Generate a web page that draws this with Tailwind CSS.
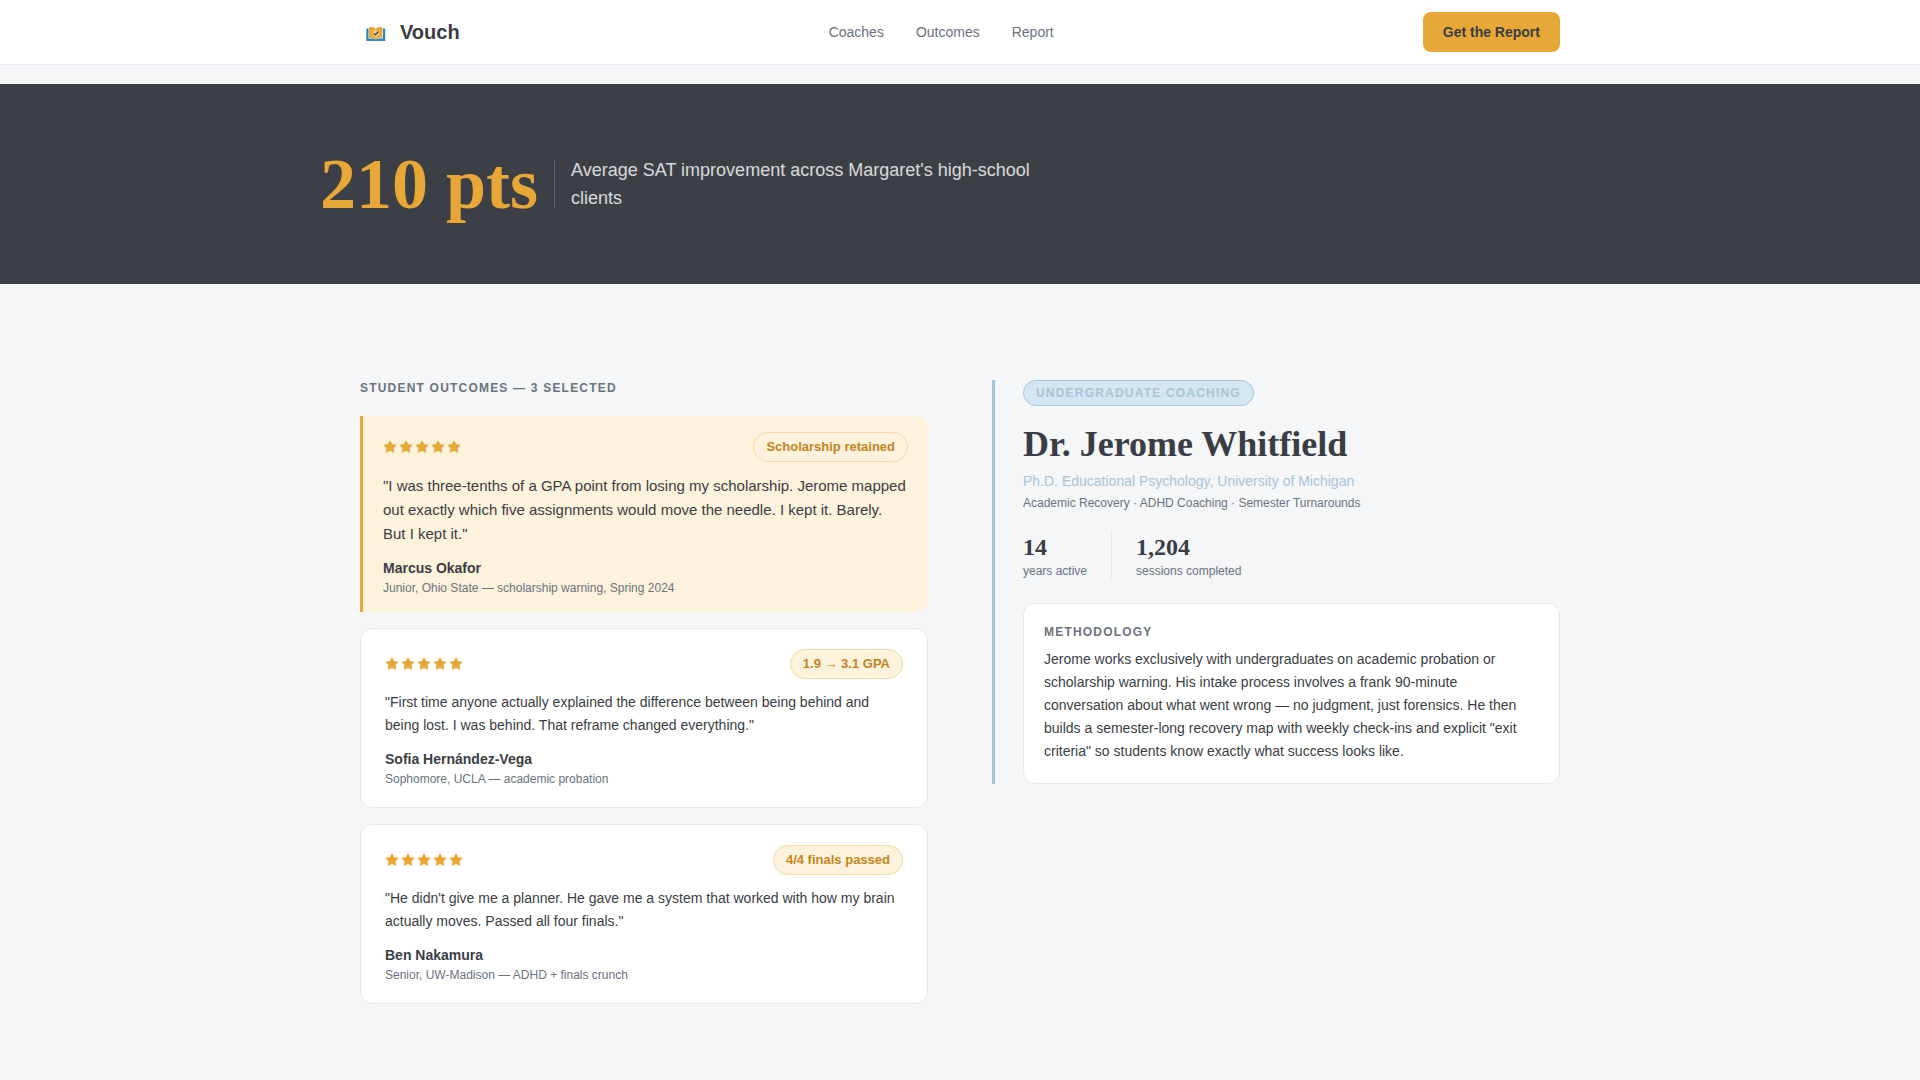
<!DOCTYPE html>
<html lang="en">
<head>
    <meta charset="UTF-8">
    <meta name="viewport" content="width=device-width, initial-scale=1.0">
    <title>Vouch</title>
    <script src="https://cdn.jsdelivr.net/npm/@tailwindcss/browser@4"></script>
</head>
<body class="min-h-screen bg-[#f4f6f8] text-[#3a3d44] font-['Liberation_Sans',Arial,sans-serif]">

    <!-- Shared star shape -->
    <svg class="hidden" aria-hidden="true">
        <symbol id="star" viewBox="0 0 14 14">
            <path d="M7 .7l1.900 3.900 4.300.6-3.100 3 .75 4.250L7 10.450l-3.850 2 .75-4.250-3.100-3 4.300-.6z" fill="#e8a838" stroke="#e8a838" stroke-width=".8" stroke-linejoin="round"/>
        </symbol>
    </svg>

    <header class="bg-white border-b border-[#e8ebef]">
        <div class="max-w-[1200px] h-16 mx-auto flex items-center justify-between">
            <a href="#" class="flex items-center gap-2">
                <svg class="w-8 h-8" viewBox="0 0 32 32" aria-hidden="true">
                    <!-- Cover -->
                    <path d="M6.300 12.500H8.500V22.600H14l1.700 1 1.700-1h5.500V12.500h2.300V25H6.300z" fill="#2f86b5"/>
                    <!-- Pages -->
                    <path d="M9 11.300c2.600-.7 5-.3 6.700 1.700 1.700-2 4.100-2.400 6.700-1.700v10.500c-2.600-.3-5 .3-6.700 1.900-1.700-1.600-4.100-2.200-6.700-1.900z" fill="#e8a838"/>
                    <path d="M15.700 13.200l4.200 4.200-4.200 4.800-4.200-4.800z" fill="#f3c77c"/>
                    <path d="M13.800 17.400l1.500 1.500 3-3.200" fill="none" stroke="#3a3d44" stroke-width="1.300"/>
                </svg>
                <span class="text-xl font-bold">Vouch</span>
            </a>
            <nav class="flex gap-8 text-sm text-[#6b7280]">
                <a href="#coaches">Coaches</a>
                <a href="#outcomes">Outcomes</a>
                <a href="#report">Report</a>
            </nav>
            <button type="button" class="h-10 px-5 rounded-lg bg-[#e8a838] text-sm font-bold">Get the Report</button>
        </div>
    </header>

    <section id="report" class="mt-[19px] bg-[#3c3f45] py-16">
        <div class="max-w-[1280px] mx-auto flex items-center gap-4">
            <p class="font-['Liberation_Serif',serif] text-7xl font-bold text-[#e8a838]">210 pts</p>
            <div class="w-px h-12 bg-white/20"></div>
            <p class="max-w-[480px] text-lg leading-7 text-white/80">Average SAT improvement across Margaret's high-school clients</p>
        </div>
    </section>

    <main class="max-w-[1200px] mx-auto py-24 grid grid-cols-2 gap-16 items-start">

        <section id="outcomes">
            <h2 class="mb-5 text-xs font-bold tracking-widest uppercase text-[#6b7280]">Student Outcomes — 3 Selected</h2>

            <div class="flex flex-col gap-4">
                <article class="border-l-3 border-[#e8a838] rounded-r-xl bg-[#fdf2dc] px-5 py-4">
                    <div class="flex items-center justify-between mb-3">
                        <div class="flex gap-0.5" role="img" aria-label="5 stars">
                            <svg class="size-3.5"><use href="#star"/></svg>
                            <svg class="size-3.5"><use href="#star"/></svg>
                            <svg class="size-3.5"><use href="#star"/></svg>
                            <svg class="size-3.5"><use href="#star"/></svg>
                            <svg class="size-3.5"><use href="#star"/></svg>
                        </div>
                        <span class="rounded-full border border-[#f6dba8] bg-[#fdf2dc] px-3 py-1 text-[13px] leading-5 font-bold text-[#c4841d]">Scholarship retained</span>
                    </div>
                    <blockquote class="mb-3 text-[15px] leading-6">"I was three-tenths of a GPA point from losing my scholarship. Jerome mapped out exactly which five assignments would move the needle. I kept it. Barely. But I kept it."</blockquote>
                    <p class="text-sm font-bold">Marcus Okafor</p>
                    <p class="mt-0.5 text-xs text-[#6b7280]">Junior, Ohio State — scholarship warning, Spring 2024</p>
                </article>

                <article class="border border-[#e5e9ed] rounded-xl bg-white px-6 py-5">
                    <div class="flex items-center justify-between mb-3">
                        <div class="flex gap-0.5" role="img" aria-label="5 stars">
                            <svg class="size-3.5"><use href="#star"/></svg>
                            <svg class="size-3.5"><use href="#star"/></svg>
                            <svg class="size-3.5"><use href="#star"/></svg>
                            <svg class="size-3.5"><use href="#star"/></svg>
                            <svg class="size-3.5"><use href="#star"/></svg>
                        </div>
                        <span class="rounded-full border border-[#f3d9a8] bg-[#fdf2dc] px-3 py-1 text-[13px] leading-5 font-bold text-[#c4841d]">1.9 → 3.1 GPA</span>
                    </div>
                    <blockquote class="mb-3 text-sm leading-[23px]">"First time anyone actually explained the difference between being behind and being lost. I was behind. That reframe changed everything."</blockquote>
                    <p class="text-sm font-bold">Sofia Hernández-Vega</p>
                    <p class="mt-0.5 text-xs text-[#6b7280]">Sophomore, UCLA — academic probation</p>
                </article>

                <article class="border border-[#e5e9ed] rounded-xl bg-white px-6 py-5">
                    <div class="flex items-center justify-between mb-3">
                        <div class="flex gap-0.5" role="img" aria-label="5 stars">
                            <svg class="size-3.5"><use href="#star"/></svg>
                            <svg class="size-3.5"><use href="#star"/></svg>
                            <svg class="size-3.5"><use href="#star"/></svg>
                            <svg class="size-3.5"><use href="#star"/></svg>
                            <svg class="size-3.5"><use href="#star"/></svg>
                        </div>
                        <span class="rounded-full border border-[#f3d9a8] bg-[#fdf2dc] px-3 py-1 text-[13px] leading-5 font-bold text-[#c4841d]">4/4 finals passed</span>
                    </div>
                    <blockquote class="mb-3 text-sm leading-[23px]">"He didn't give me a planner. He gave me a system that worked with how my brain actually moves. Passed all four finals."</blockquote>
                    <p class="text-sm font-bold">Ben Nakamura</p>
                    <p class="mt-0.5 text-xs text-[#6b7280]">Senior, UW-Madison — ADHD + finals crunch</p>
                </article>
            </div>
        </section>

        <section id="coaches" class="border-l-3 border-[#a8c4d8] pl-7">
            <div class="flex mb-4">
                <span class="rounded-full border border-[#a8c4d8] bg-[#d4e6f2] px-3 py-1 text-xs font-bold tracking-widest uppercase text-[#a8c4d8]">Undergraduate Coaching</span>
            </div>
            <h1 class="font-['Liberation_Serif',serif] text-4xl leading-tight font-bold">Dr. Jerome Whitfield</h1>
            <p class="mt-1 text-sm text-[#a8c4d8]">Ph.D. Educational Psychology, University of Michigan</p>
            <p class="mt-1 text-xs text-[#6b7280]">Academic Recovery · ADHD Coaching · Semester Turnarounds</p>

            <div class="flex gap-6 mt-5 mb-6">
                <div>
                    <p class="font-['Liberation_Serif',serif] text-2xl font-bold">14</p>
                    <p class="text-xs text-[#6b7280]">years active</p>
                </div>
                <div class="w-px bg-[#e5e9ed]"></div>
                <div>
                    <p class="font-['Liberation_Serif',serif] text-2xl font-bold">1,204</p>
                    <p class="text-xs text-[#6b7280]">sessions completed</p>
                </div>
            </div>

            <div class="border border-[#e5e9ed] rounded-xl bg-white p-5">
                <h2 class="mb-2 text-xs font-bold tracking-widest uppercase text-[#6b7280]">Methodology</h2>
                <p class="text-sm leading-[23px]">Jerome works exclusively with undergraduates on academic probation or scholarship warning. His intake process involves a frank 90-minute conversation about what went wrong — no judgment, just forensics. He then builds a semester-long recovery map with weekly check-ins and explicit "exit criteria" so students know exactly what success looks like.</p>
            </div>
        </section>

    </main>

</body>
</html>
